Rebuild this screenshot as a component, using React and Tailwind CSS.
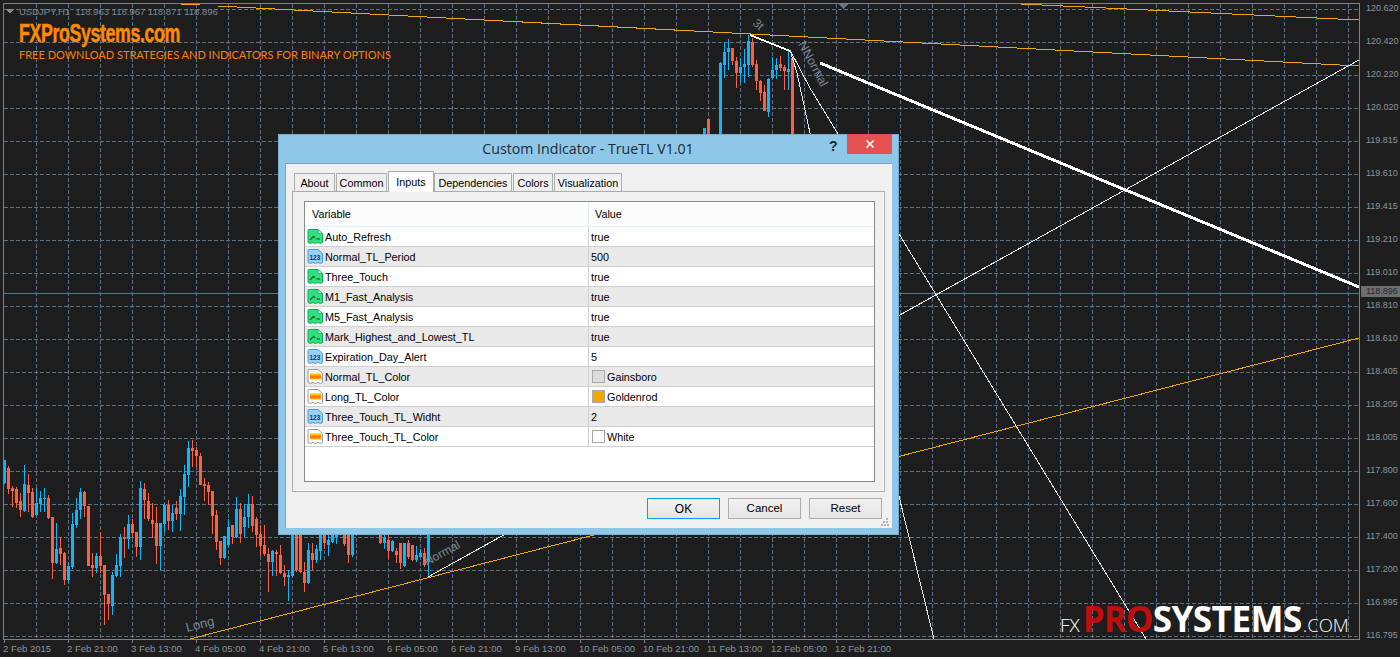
import React from "react";
import { X } from "lucide-react";

const PRICES = ["120.620","120.420","120.220","120.020","119.815","119.610","119.415","119.210","119.010","118.810","118.610","118.405","118.205","118.005","117.800","117.600","117.400","117.200","116.995","116.795"];
const TIMES = ["2 Feb 2015","2 Feb 21:00","3 Feb 13:00","4 Feb 05:00","4 Feb 21:00","5 Feb 13:00","6 Feb 05:00","6 Feb 21:00","9 Feb 13:00","10 Feb 05:00","10 Feb 21:00","11 Feb 13:00","12 Feb 05:00","12 Feb 21:00"];
const TABS = [
  { name: "About", w: "w-[41px]" },
  { name: "Common", w: "w-[51px]" },
  { name: "Inputs", w: "w-[46px]", active: true },
  { name: "Dependencies", w: "w-[78px]" },
  { name: "Colors", w: "w-[40px]" },
  { name: "Visualization", w: "w-[68px]" },
];
const ROWS = [
  { icon: "bool", name: "Auto_Refresh", value: "true" },
  { icon: "num", name: "Normal_TL_Period", value: "500" },
  { icon: "bool", name: "Three_Touch", value: "true" },
  { icon: "bool", name: "M1_Fast_Analysis", value: "true" },
  { icon: "bool", name: "M5_Fast_Analysis", value: "true" },
  { icon: "bool", name: "Mark_Highest_and_Lowest_TL", value: "true" },
  { icon: "num", name: "Expiration_Day_Alert", value: "5" },
  { icon: "color", name: "Normal_TL_Color", value: "Gainsboro", swatch: "bg-[#dcdcdc]" },
  { icon: "color", name: "Long_TL_Color", value: "Goldenrod", swatch: "bg-[#f0a800]" },
  { icon: "num", name: "Three_Touch_TL_Widht", value: "2" },
  { icon: "color", name: "Three_Touch_TL_Color", value: "White", swatch: "bg-white" },
];

// candles read off the chart: [x, up, bodyTop, bodyBottom, wickTop, wickBottom], zoomed 3x
const LEFT = [
  [13,1,90,160,90,162],[25,0,115,178,108,192],[37,0,174,183,168,232],[49,0,178,220,172,235],[61,0,213,240,188,262],
  [73,1,162,242,105,245],[85,0,165,190,132,245],[97,0,186,260,175,265],[109,1,220,256,175,258],[121,1,204,222,183,246],
  [133,1,204,206,175,246],[145,0,204,265,195,268],[157,0,262,400,262,447],[169,1,357,400,278,402],[181,0,354,372,322,405],
  [193,0,369,450,365,465],[205,1,408,450,395,458],[217,1,282,412,250,418],[229,1,240,285,205,295],[241,1,186,240,175,268],
  [253,0,186,228,182,262],[265,0,228,407,228,408],[277,0,405,414,368,442],[289,1,378,414,370,430],[301,0,378,408,305,430],
  [313,0,405,495,405,585],[325,0,492,522,492,570],[337,1,435,528,425,555],[349,1,405,438,372,440],[361,1,322,408,312,440],
  [373,0,322,328,290,385],[385,1,282,328,255,358],[397,0,282,310,268,322],[409,0,306,352,305,382],[421,1,174,352,153,390],
  [433,0,176,210,160,268],[445,0,212,268,190,272],[457,0,270,282,220,325],[469,0,280,348,232,403],[481,1,278,348,278,420],
  [493,1,224,282,218,305],[505,0,224,274,210,300],[517,1,248,274,225,305],[529,0,234,252,212,270],[541,1,198,252,178,303],
  [553,1,132,200,105,255],[565,1,54,135,32,170],[577,0,54,62,30,110],[589,0,60,78,52,112],[601,0,78,165,68,165],
  [613,0,162,168,145,212],[625,0,165,185,155,225],[637,0,183,258,183,312],[649,0,255,335,240,360],[661,0,333,384,333,405],
  [673,1,318,384,318,388],[685,1,292,346,268,350],[697,0,284,320,284,342],[709,1,237,320,202,325],[721,0,237,312,220,340],
  [733,1,262,290,222,322],[745,1,222,260,192,295],[757,0,222,288,198,305],[769,0,268,315,262,352],[781,0,312,348,285,378],
  [793,0,345,372,285,378],[805,0,372,396,355,485],[817,1,362,396,360,438],[829,0,365,372,360,438],[841,0,375,430,345,432],
  [853,0,430,440,405,468],[865,1,436,440,420,512],
];
const BOTTOM = [
  [37,1,0,168,0,170],[49,0,0,150,0,155],[61,0,0,155,0,160],[73,0,155,188,125,215],[85,1,90,188,70,192],[97,0,98,120,70,150],
  [109,1,88,120,75,130],[121,1,0,92,0,120],[133,0,0,70,0,88],[145,1,60,75,0,108],[157,1,0,65,0,70],[169,1,0,52,0,72],
  [193,0,0,72,0,78],[205,0,0,105,0,130],[217,1,0,105,0,110],[301,0,0,70,0,72],[313,1,55,68,0,88],[325,0,60,92,0,118],
  [337,1,62,92,60,95],[349,0,92,105,85,130],[361,0,68,130,68,148],[373,1,70,138,68,140],[385,0,68,110,60,118],[397,0,75,120,75,122],
  [409,1,105,120,78,125],[421,1,100,110,88,112],[433,0,100,135,85,140],[445,1,0,125,0,170],
];
const TOP = [
  [43,1,385,405,385,405],[55,0,358,405,358,405],[91,1,190,405,185,405],[103,1,155,195,125,235],[115,1,145,155,118,210],
  [127,0,145,182,145,195],[139,0,182,220,170,265],[151,1,202,218,175,250],[163,1,192,200,148,250],[175,1,122,195,105,230],
  [187,0,125,195,115,200],[199,0,192,242,180,270],[211,0,242,278,240,302],[223,0,276,332,255,332],[235,1,237,335,235,350],
  [247,1,210,235,170,235],[259,1,195,210,175,237],[271,0,192,205,168,212],[283,0,200,212,195,270],[295,1,207,215,150,270],
  [307,0,175,405,175,405],
];

const toPage = (set, ox, oy) =>
  set.map(([x, up, bt, bb, wt, wb]) => ({
    x: Math.round(ox + x / 3 - 0.5),
    up,
    bt: oy + bt / 3,
    bb: oy + bb / 3,
    wt: oy + wt / 3,
    wb: oy + wb / 3,
  }));

const CANDLES = [...toPage(LEFT, 0, 430), ...toPage(BOTTOM, 280, 520), ...toPage(TOP, 690, 0)];
const gridX = Array.from({ length: 42 }, (_, i) => 36.5 + 32 * i);
const gridY = Array.from({ length: 20 }, (_, i) => 9.5 + 33 * i);

function Candle({ c }) {
  const color = c.up ? "#0fb5f7" : "#fb5f44";
  return (
    <g fill={color}>
      <rect x={c.x} y={c.wt} width="1" height={Math.max(c.wb - c.wt, 1)} />
      <rect x={c.x - 1} y={c.bt} width="3" height={Math.max(c.bb - c.bt, 1)} />
    </g>
  );
}

function Chart() {
  return (
    <svg viewBox="4 4 1355 635" className="block w-full h-full" shapeRendering="crispEdges">
      {gridX.map((x) => (
        <line key={x} x1={x} x2={x} y1="4" y2="639" stroke="#5c7084" strokeDasharray="4 2" />
      ))}
      {gridY.map((y) => (
        <line key={y} x1="4" x2="1359" y1={y} y2={y} stroke="#5c7084" strokeDasharray="4 2" />
      ))}
      <line x1="4" x2="1359" y1="293.5" y2="293.5" stroke="#54788f" />
      {CANDLES.map((c, i) => (
        <Candle key={i} c={c} />
      ))}

      {/* trend lines */}
      <g stroke="#f0a800" fill="none">
        <line x1="171" y1="3.5" x2="200" y2="5" />
        <line x1="218" y1="6" x2="1359" y2="66" />
        <line x1="1000" y1="3" x2="1359" y2="20" />
        <line x1="190" y1="639" x2="1359" y2="338" />
      </g>
      <g stroke="#e8e8e8" fill="none">
        <line x1="428" y1="577" x2="1359" y2="60" />
        <line x1="810" y1="88" x2="1146" y2="639" />
        <polyline points="790,50 797,73 810,133 934,639" />
        <line x1="790" y1="50" x2="810" y2="88" />
      </g>
      <g stroke="#ffffff" fill="none">
        <line x1="750" y1="35" x2="790" y2="51" strokeWidth="2" />
        <line x1="820" y1="63" x2="1359" y2="287" strokeWidth="3" />
      </g>

      <polygon points="838,4 848,4 843,9" fill="#5f7488" />
      <polygon points="6,9 14,9 10,14" fill="#8a8a8a" />
      <line x1="817" y1="75" x2="821" y2="71" stroke="#778899" />

      <g fontFamily="'Liberation Sans', sans-serif" fontSize="12" fill="#778899" shapeRendering="auto">
        <text transform="translate(752 24) rotate(42)">3t</text>
        <text transform="translate(798 44) rotate(62)" fontSize="12.5">NNormal</text>
        <text transform="translate(427 566) rotate(-29)" fill="#7c8a90">Normal</text>
        <text transform="translate(187 632) rotate(-14)" fontSize="13">Long</text>
      </g>
    </svg>
  );
}

function DocShape({ fill, stroke }) {
  return (
    <path
      d="M1 2.5 Q1 1.5 2 1.5 H11 L15.5 5.5 V14.5 L13.5 15.5 L11 14.5 L8.5 15.5 L6 14.5 L3.5 15.5 L1 14.5 Z"
      fill={fill}
      stroke={stroke}
    />
  );
}

function RowIcon({ type }) {
  if (type === "bool") {
    return (
      <svg viewBox="0 0 17 17" className="w-[17px] h-[17px] shrink-0">
        <DocShape fill="#2fe07e" stroke="#12a85c" />
        <path d="M11 2 V5.5 H15" fill="#c8f7dc" stroke="#12a85c" strokeWidth="0.7" />
        <path d="M3 12 L6.5 8.5 L8 10" fill="none" stroke="#0a6b3a" strokeWidth="1.3" />
        <path d="M9.5 11 H13" fill="none" stroke="#0a6b3a" strokeWidth="1.3" />
      </svg>
    );
  }
  if (type === "num") {
    return (
      <svg viewBox="0 0 17 17" className="w-[17px] h-[17px] shrink-0">
        <DocShape fill="#97cff5" stroke="#4c9ed6" />
        <text x="2.5" y="11.5" fontSize="6.5" fontWeight="700" fill="#12345a" fontFamily="'Liberation Sans', sans-serif">123</text>
      </svg>
    );
  }
  return (
    <svg viewBox="0 0 17 17" className="w-[17px] h-[17px] shrink-0">
      <DocShape fill="#fafafa" stroke="#9a9a9a" />
      <rect x="3" y="5.5" width="11" height="6" fill="#ffc400" />
      <rect x="3" y="7.5" width="11" height="3" fill="#ff7a00" />
    </svg>
  );
}

function Dialog() {
  return (
    <div className="absolute left-[278px] top-[134px] w-[621px] h-[401px] bg-[#8fc7e9] border border-[#7aaed0] flex flex-col font-['Liberation_Sans',sans-serif] text-[10.8px] text-black">
      {/* title bar */}
      <div className="h-[28px] shrink-0 relative flex justify-center items-center pr-[1px]">
        <span className="font-['Open_Sans',sans-serif] text-[14.2px] text-[#1e2a33]">Custom Indicator - TrueTL V1.01</span>
        <span className="absolute left-[550px] top-[1px] text-[14px] font-bold text-[#1c2630]">?</span>
        <button className="absolute right-[6px] top-[-1px] w-[45px] h-[20px] bg-[#e55252] flex items-center justify-center">
          <X size={12} strokeWidth={3.5} className="text-white" />
        </button>
      </div>

      {/* client area */}
      <div className="relative flex-1 mx-[6px] mb-[6px] bg-[#f0f0f0] border-t border-l border-[#7ea6c2] flex flex-col px-[6px] pt-[7px]">
        <div className="flex pl-[2px] items-end h-[20px] relative z-10">
          {TABS.map((t) =>
            t.active ? (
              <div key={t.name} className={`${t.w} h-[21px] -mb-px bg-white border border-b-0 border-[#acacac] flex items-start justify-center pt-[2px]`}>
                {t.name}
              </div>
            ) : (
              <div key={t.name} className={`${t.w} h-[18px] mr-[1px] pt-[1px] bg-[#f0f0f0] border border-b-0 border-[#acacac] flex items-center justify-center`}>
                {t.name}
              </div>
            )
          )}
        </div>

        <div className="w-[593px] h-[301px] border border-[#acacac] bg-[#f0f0f0] px-[11px] pt-[9px] shadow-[inset_0_-1px_0_#ffffff,inset_-1px_0_0_#ffffff]">
          <div className="w-[571px] h-[281px] bg-white border border-[#8a8a92]">
            {/* list header */}
            <div className="h-[25px] grid grid-cols-[284px_1fr] border-b border-[#e3f0fa] bg-[#fcfcfc]">
              <div className="pl-[7px] pt-[1px] flex items-center border-r border-[#e3f0fa]">Variable</div>
              <div className="pl-[6px] pt-[1px] flex items-center">Value</div>
            </div>
            {ROWS.map((r, i) => (
              <div key={r.name} className={`h-[20px] grid grid-cols-[284px_1fr] border-b border-[#d0d0d0] ${i % 2 ? "bg-[#e9e9e9]" : "bg-white"}`}>
                <div className="flex items-center pl-[2px] border-r border-[#d0d0d0]">
                  <RowIcon type={r.icon} />
                  <span className="ml-[1px] pt-[1px]">{r.name}</span>
                </div>
                <div className="flex items-center pl-[2px]">
                  {r.swatch && <span className={`w-[13px] h-[13px] ml-[1px] mr-[2px] border border-[#a8a8a8] ${r.swatch}`}></span>}
                  <span className="pt-[1px]">{r.value}</span>
                </div>
              </div>
            ))}
          </div>
        </div>

        {/* buttons */}
        <div className="flex justify-end gap-[8px] mt-[6px] pr-[4px]">
          <button className="w-[73px] h-[21px] border border-[#1397f0] bg-gradient-to-b from-[#f2f2f2] to-[#e5e5e5] text-[12px]">OK</button>
          <button className="w-[73px] h-[21px] border border-[#adadad] bg-gradient-to-b from-[#f2f2f2] to-[#e5e5e5] text-[11.5px]">Cancel</button>
          <button className="w-[73px] h-[21px] border border-[#adadad] bg-gradient-to-b from-[#f2f2f2] to-[#e5e5e5] text-[11.5px]">Reset</button>
        </div>

        <svg viewBox="0 0 8 8" className="absolute right-[3px] bottom-[2px] w-[8px] h-[8px]" fill="#b4b4b4">
          <rect x="5" y="0" width="2" height="2" />
          <rect x="2" y="3" width="2" height="2" />
          <rect x="5" y="3" width="2" height="2" />
          <rect x="0" y="6" width="2" height="2" />
          <rect x="3" y="6" width="2" height="2" />
          <rect x="6" y="6" width="2" height="2" />
        </svg>
      </div>
    </div>
  );
}

export default function App() {
  return (
    <div className="relative w-[1400px] h-[657px] overflow-hidden bg-[#1e1e1e] flex flex-col font-['Liberation_Sans',sans-serif] text-[9.5px] text-[#8a969c]">
      <div className="flex h-[640px] shrink-0">
        <div className="relative shrink-0 ml-[3px] mt-[3px] w-[1357px] h-[637px] border border-[#808080]">
          <Chart />
          <div className="absolute left-[15px] top-[1px] whitespace-pre text-[9.5px] leading-[14px] text-[#7a8b94]">USDJPY,H1  118.963 118.967 118.871 118.896</div>
        </div>
        {/* price axis */}
        <div className="relative flex-1 min-w-0 flex flex-col pl-[6px] -mt-[8px] text-[9px]">
          {PRICES.map((p) => (
            <div key={p} className="h-[33px] shrink-0 flex items-center">{p}</div>
          ))}
          <div className="absolute left-[1px] top-[294px] w-[39px] h-[11px] bg-[#6e6e6e] text-[#1c2a36] pl-[5px] flex items-center">118.896</div>
        </div>
      </div>

      {/* time axis */}
      <div className="flex pl-[4px]">
        {TIMES.map((t) => (
          <div key={t} className="w-[64px] shrink-0 flex flex-col items-start">
            <span className="w-px h-[3px] bg-[#808080]"></span>
            <span className="-ml-px -mt-px whitespace-nowrap leading-[13px]">{t}</span>
          </div>
        ))}
      </div>

      {/* watermarks */}
      <div className="absolute left-[19px] top-[18px] text-[25px] leading-[30px] font-bold text-[#ff8a00] whitespace-nowrap tracking-[-0.5px] origin-left scale-x-[0.71] [-webkit-text-stroke:0.5px_#ff8a00]">FXProSystems.com</div>
      <div className="absolute left-[19px] top-[47px] text-[11px] leading-[15px] text-[#ff7f00] whitespace-nowrap font-['Lato',sans-serif]">FREE DOWNLOAD STRATEGIES AND INDICATORS FOR BINARY OPTIONS</div>
      <div className="absolute left-[1060px] top-[596px] flex items-baseline whitespace-nowrap font-['Open_Sans',sans-serif] text-white h-[46px] leading-[46px]">
        <span className="text-[19px] font-light mr-[3px]">FX</span>
        <span className="text-[35px] font-bold text-[#c00d0d] tracking-[-1px]">PRO</span>
        <span className="text-[35px] font-bold tracking-[-0.5px]">SYSTEMS</span>
        <span className="text-[18.5px] font-light ml-[1px]">.COM</span>
      </div>

      <Dialog />
    </div>
  );
}
